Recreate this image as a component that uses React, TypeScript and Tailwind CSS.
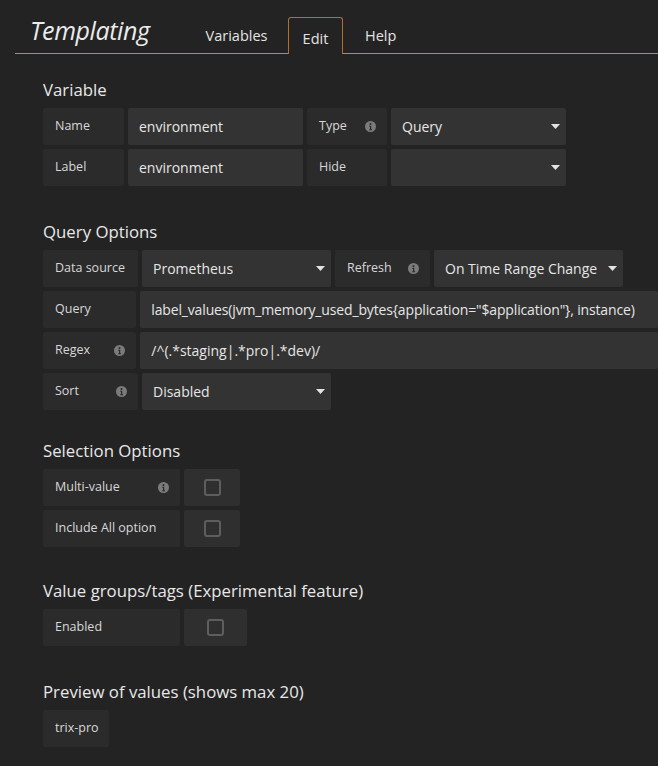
import React from 'react';

const font = { fontFamily: '"Open Sans", "Noto Sans", sans-serif' };

const Info = () => (
  <svg width="11" height="11" viewBox="0 0 12 12" className="shrink-0">
    <circle cx="6" cy="6" r="6" fill="#7b7b7b" />
    <circle cx="6" cy="3.3" r="1.1" fill="#2a2a2a" />
    <path d="M4.6 5.2h2.2v3.9h0.9v1h-3.1v-1h0.9V6.2h-0.9z" fill="#2a2a2a" />
  </svg>
);

const Caret = () => (
  <svg width="9" height="5" viewBox="0 0 9 5" className="shrink-0">
    <path d="M0 0h9L4.5 5z" fill="#e3e3e3" />
  </svg>
);

const Label: React.FC<{ w: string; text: string; info?: boolean }> = ({ w, text, info }) => (
  <div className={`${w} h-[37px] bg-[#2b2b2b] flex items-center justify-between pl-3 pr-[11px] text-[12.5px] text-[#d8d8d8] rounded-[2px] whitespace-nowrap`}>
    <span>{text}</span>
    {info && <Info />}
  </div>
);

const Input: React.FC<{ w: string; text: string; tight?: boolean }> = ({ w, text, tight }) => (
  <div className={`${w} h-[37px] bg-[#333333] flex items-center px-[11px] text-[14px] text-[#e6e6e6] rounded-[2px] whitespace-nowrap overflow-hidden ${tight ? '-tracking-[0.15px]' : ''}`}>
    {text}
  </div>
);

const Select: React.FC<{ w: string; text: string }> = ({ w, text }) => (
  <div className={`${w} h-[37px] bg-[#333333] flex items-center justify-between pl-[11px] pr-[6px] text-[14px] text-[#e6e6e6] rounded-[2px] whitespace-nowrap`}>
    <span>{text}</span>
    <Caret />
  </div>
);

const Check: React.FC<{ w: string }> = ({ w }) => (
  <div className={`${w} h-[37px] bg-[#2f2f2f] flex items-center justify-center rounded-[2px]`}>
    <div className="w-[17px] h-[17px] rounded-[3px] border-2 border-[#5e5e5e]" />
  </div>
);

const Heading: React.FC<{ children: React.ReactNode }> = ({ children }) => (
  <div className="text-[16.8px] text-[#e8e8e8] leading-[20px] mb-[8px] whitespace-nowrap">{children}</div>
);

export default function App() {
  return (
    <div style={font} className="w-[658px] h-[766px] bg-[#232323] overflow-hidden">
      {/* header */}
      <div className="flex items-end pt-[17px] pl-[15px]">
        <div className="flex items-end border-b border-[#c98a22] w-[273px] h-[37px] pl-[15px]">
          <span className="italic text-[25px] leading-[30px] text-[#ebebeb] mb-[8px] -tracking-[0.4px]">Templating</span>
          <span className="ml-[56px] mb-[6px] text-[14.5px] text-[#e3e3e3]">Variables</span>
        </div>
        <div className="w-[55px] h-[37px] border border-b-0 border-[#b36f24] rounded-t-[3px] flex items-center justify-center pt-[5px] text-[14.5px] text-[#e3e3e3]">
          Edit
        </div>
        <div className="flex-1 flex items-end border-b border-[#c98a22] h-[37px] pl-[22px]">
          <span className="mb-[6px] text-[14.5px] text-[#e3e3e3]">Help</span>
        </div>
      </div>

      <div className="pl-[43px] pt-[26px]">
        <Heading>Variable</Heading>
        <div className="flex flex-col gap-[4px]">
          <div className="flex gap-[4px]">
            <Label w="w-[81px]" text="Name" />
            <Input w="w-[175px]" text="environment" />
            <Label w="w-[80px]" text="Type" info />
            <Select w="w-[175px]" text="Query" />
          </div>
          <div className="flex gap-[4px]">
            <Label w="w-[81px]" text="Label" />
            <Input w="w-[175px]" text="environment" />
            <Label w="w-[80px]" text="Hide" />
            <Select w="w-[175px]" text="" />
          </div>
        </div>

        <div className="mt-[36px]">
          <Heading>Query Options</Heading>
          <div className="flex flex-col gap-[4px]">
            <div className="flex gap-[4px]">
              <Label w="w-[95px]" text="Data source" />
              <Select w="w-[189px]" text="Prometheus" />
              <Label w="w-[95px]" text="Refresh" info />
              <Select w="w-[189px]" text="On Time Range Change" />
            </div>
            <div className="flex gap-[4px]">
              <Label w="w-[95px]" text="Query" />
              <Input w="w-[530px]" tight text={'label_values(jvm_memory_used_bytes{application="$application"}, instance)'} />
            </div>
            <div className="flex gap-[4px]">
              <Label w="w-[95px]" text="Regex" info />
              <Input w="w-[530px]" text="/^(.*staging|.*pro|.*dev)/" />
            </div>
            <div className="flex gap-[4px]">
              <Label w="w-[95px]" text="Sort" info />
              <Select w="w-[189px]" text="Disabled" />
            </div>
          </div>
        </div>

        <div className="mt-[31px]">
          <Heading>Selection Options</Heading>
          <div className="flex flex-col gap-[4px]">
            <div className="flex gap-[4px]">
              <Label w="w-[137px]" text="Multi-value" info />
              <Check w="w-[56px]" />
            </div>
            <div className="flex gap-[4px]">
              <Label w="w-[137px]" text="Include All option" />
              <Check w="w-[56px]" />
            </div>
          </div>
        </div>

        <div className="mt-[34px]">
          <Heading>Value groups/tags (Experimental feature)</Heading>
          <div className="flex gap-[4px]">
            <Label w="w-[137px]" text="Enabled" />
            <Check w="w-[63px]" />
          </div>
        </div>

        <div className="mt-[36px]">
          <Heading>Preview of values (shows max 20)</Heading>
          <div className="flex">
            <Label w="w-[66px]" text="trix-pro" />
          </div>
        </div>
      </div>
    </div>
  );
}
